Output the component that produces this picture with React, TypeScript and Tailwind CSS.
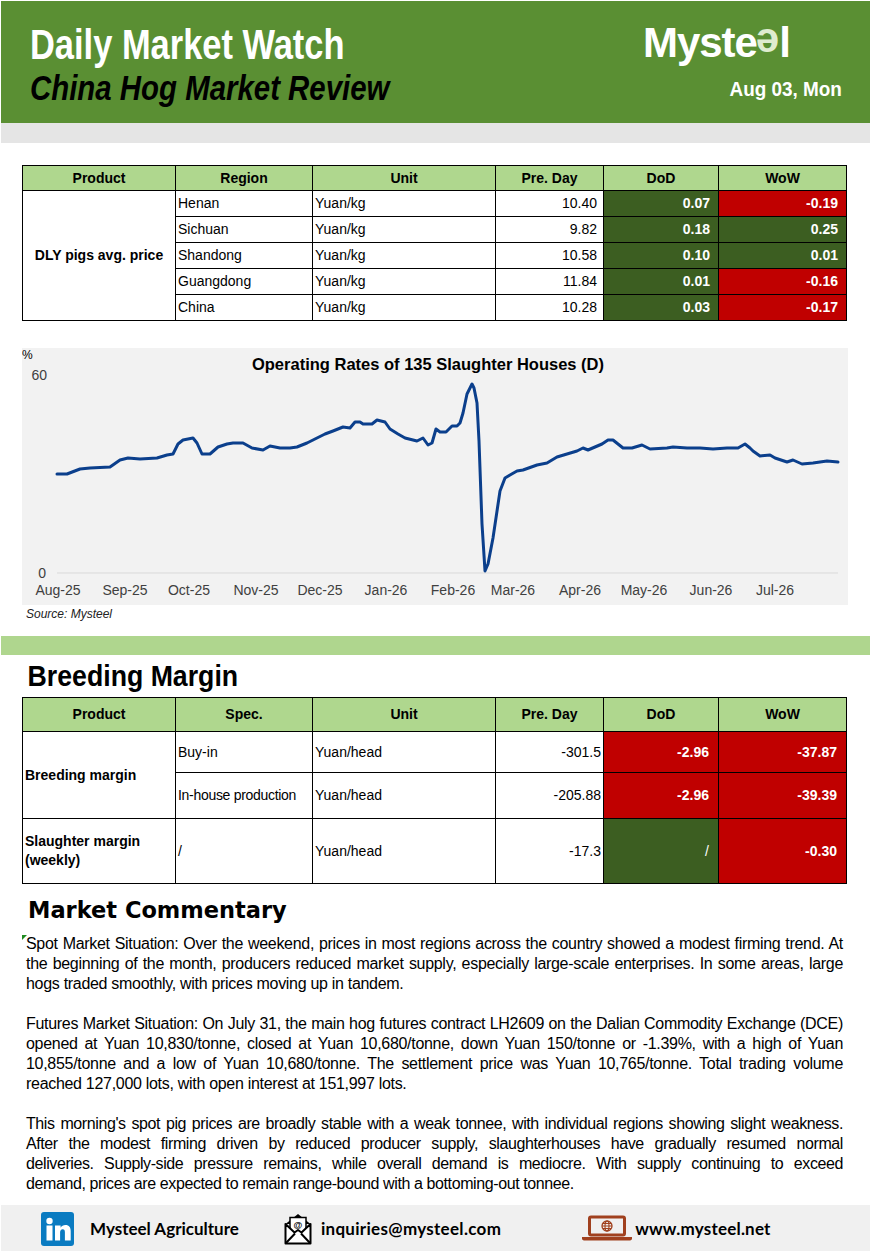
import React from "react";

const arial = "font-['Liberation_Sans',Arial,sans-serif]";

const GREEN = "bg-[#3c5e21]";
const RED = "bg-[#c00000]";

const prices = [
  { region: "Henan", pre: "10.40", dod: "0.07", wow: "-0.19" },
  { region: "Sichuan", pre: "9.82", dod: "0.18", wow: "0.25" },
  { region: "Shandong", pre: "10.58", dod: "0.10", wow: "0.01" },
  { region: "Guangdong", pre: "11.84", dod: "0.01", wow: "-0.16" },
  { region: "China", pre: "10.28", dod: "0.03", wow: "-0.17" },
];

const tone = (v: string) => (v.startsWith("-") ? RED : GREEN);

const line =
  "57,473 67,473 80,468 90,467 110,466 120,459 128,457 140,458 157,457 167,454 173,453 178,443 183,439 193,437 197,442 202,453 210,453 218,446 227,443 233,442 243,442 252,447 263,449 270,445 280,447 290,447 297,446 307,442 317,437 325,433 333,430 343,426 350,427 355,421 360,421 363,423 372,423 377,419 385,421 390,428 398,433 405,437 417,440 423,437 428,444 432,442 436,428 440,431 446,431 452,425 457,425 460,422 463,412 467,393 472,383 474,387 477,402 479,440 482,523 485,570 488,563 493,537 500,490 505,477 510,474 517,470 523,469 537,464 547,462 557,456 567,453 577,450 583,447 588,449 595,446 602,443 608,439 613,439 618,443 623,447 632,447 642,444 650,448 667,447 673,446 687,447 700,447 713,448 727,447 738,447 745,443 750,447 753,450 760,455 770,454 775,457 787,461 793,459 802,463 813,462 827,460 838,461";

const months = [
  ["Aug-25", 58], ["Sep-25", 125], ["Oct-25", 189], ["Nov-25", 256], ["Dec-25", 320], ["Jan-26", 386],
  ["Feb-26", 453], ["Mar-26", 513], ["Apr-26", 580], ["May-26", 644], ["Jun-26", 711], ["Jul-26", 775],
] as const;

const paragraphs = [
  {
    font: "tracking-[-0.3px]",
    lines: [
      "Spot Market Situation: Over the weekend, prices in most regions across the country showed a modest firming trend. At",
      "the beginning of the month, producers reduced market supply, especially large-scale enterprises. In some areas, large",
      "hogs traded smoothly, with prices moving up in tandem.",
    ],
  },
  {
    font: "tracking-[-0.3px]",
    lines: [
      "Futures Market Situation: On July 31, the main hog futures contract LH2609 on the Dalian Commodity Exchange (DCE)",
      "opened at Yuan 10,830/tonne, closed at Yuan 10,680/tonne, down Yuan 150/tonne or -1.39%, with a high of  Yuan",
      "10,855/tonne and a low of Yuan 10,680/tonne. The settlement price was Yuan 10,765/tonne. Total trading volume",
      "reached 127,000 lots, with open interest at 151,997 lots.",
    ],
  },
  {
    font: "tracking-[-0.4px]",
    lines: [
      "This morning's spot pig prices are broadly stable with a weak tonnee, with individual regions showing slight weakness.",
      "After the modest firming driven by reduced producer supply, slaughterhouses have gradually resumed normal",
      "deliveries. Supply-side pressure remains, while overall demand is mediocre. With supply continuing to exceed",
      "demand, prices are expected to remain range-bound with a bottoming-out tonnee.",
    ],
  },
];

function LinkedInIcon() {
  return (
    <svg width="33" height="34" viewBox="0 0 33 34">
      <rect width="33" height="34" rx="3" fill="#0a7bc1" />
      <circle cx="8.5" cy="9" r="3.2" fill="#fff" />
      <rect x="5.5" y="13.5" width="6" height="15" fill="#fff" />
      <path d="M14 13.5h5.6v2.2c1-1.6 2.7-2.6 4.8-2.6 3.8 0 5.3 2.4 5.3 6.2v9.2h-5.8v-8.2c0-1.8-.5-3-2.2-3-1.8 0-2.6 1.3-2.6 3.2v8H14z" fill="#fff" />
    </svg>
  );
}

function MailIcon() {
  return (
    <svg width="30" height="32" viewBox="0 0 30 32">
      <path d="M15 1 2.5 11h25z" fill="#000" />
      <rect x="7" y="4.5" width="16" height="15" fill="#fff" stroke="#000" strokeWidth="1.5" />
      <text x="15" y="15" textAnchor="middle" fontSize="9" fontFamily="Liberation Sans, Arial, sans-serif" fill="#000">@</text>
      <path d="M2.5 11v19.5h25V11l-9 8.5L15 17l-3.5 2.5z" fill="#fff" stroke="#000" strokeWidth="2" strokeLinejoin="round" />
      <path d="M3 30 12 20.5M27 30 18 20.5" stroke="#000" strokeWidth="2" />
    </svg>
  );
}

function LaptopIcon() {
  return (
    <svg width="52" height="28" viewBox="0 0 52 28">
      <rect x="8.5" y="2" width="35" height="18" rx="1.5" fill="none" stroke="#a0401e" strokeWidth="3" />
      <circle cx="26" cy="11" r="5" fill="none" stroke="#a0401e" strokeWidth="1.3" />
      <ellipse cx="26" cy="11" rx="2" ry="5" fill="none" stroke="#a0401e" strokeWidth="1.1" />
      <path d="M21 11h10M22 8.5h8M22 13.5h8" stroke="#a0401e" strokeWidth="1" />
      <path d="M1 22h50v1.5c0 1-1 2-2 2H3c-1 0-2-1-2-2z" fill="#a0401e" />
    </svg>
  );
}

export default function App() {
  const th = "border border-black bg-[#afd78e] font-bold text-center";
  const cols = (
    <colgroup>
      <col className="w-[153px]" />
      <col className="w-[137px]" />
      <col className="w-[183px]" />
      <col className="w-[108px]" />
      <col className="w-[115px]" />
      <col className="w-[128px]" />
    </colgroup>
  );
  return (
    <div className={arial + " w-[870px] min-h-[1251px] overflow-hidden bg-white text-black"}>
      {/* Header */}
      <div className="ml-px mt-px flex h-[122px] justify-between bg-[#5a8f33]">
        <div className="pl-[29px] pt-[21px]">
          <div className="origin-left scale-x-[0.82] whitespace-nowrap text-[42px] font-bold leading-[46px] text-white">
            Daily Market Watch
          </div>
          <div className="mt-[1px] origin-left scale-x-[0.84] whitespace-nowrap text-[35px] font-bold italic leading-[38px] text-black">
            China Hog Market Review
          </div>
        </div>
        <div className="flex flex-col items-end pr-[28px] pt-[17px]">
          <div className="mr-[52px] text-[42px] font-bold leading-[50px] tracking-[-1px] text-white">
            Myst<span>e</span>
            <span className="inline-block rotate-180 text-[#dfeccf]">e</span>l
          </div>
          <div className="mt-[10px] origin-right scale-x-[0.9] whitespace-nowrap text-[21px] font-bold leading-[22px] text-white">
            Aug 03, Mon
          </div>
        </div>
      </div>
      <div className="ml-px h-[20px] bg-[#e5e5e5]" />

      {/* Price table */}
      <table className="mx-[22px] mt-[22px] w-[824px] table-fixed border-collapse text-[14px]">
        {cols}
        <thead>
          <tr className="h-[25px]">
            {["Product", "Region", "Unit", "Pre. Day", "DoD", "WoW"].map((h) => (
              <th key={h} className={th}>{h}</th>
            ))}
          </tr>
        </thead>
        <tbody>
          {prices.map((r, i) => (
            <tr key={r.region} className="h-[26px]">
              {i === 0 && (
                <td rowSpan={5} className="border border-black text-center font-bold">DLY pigs avg. price</td>
              )}
              <td className="border border-black pl-[2px]">{r.region}</td>
              <td className="border border-black pl-[2px]">Yuan/kg</td>
              <td className="border border-black pr-[6px] text-right">{r.pre}</td>
              <td className={"border border-black pr-[8px] text-right font-bold text-white " + tone(r.dod)}>{r.dod}</td>
              <td className={"border border-black pr-[8px] text-right font-bold text-white " + tone(r.wow)}>{r.wow}</td>
            </tr>
          ))}
        </tbody>
      </table>

      {/* Chart */}
      <div className="mx-[22px] mt-[27px] h-[257px] bg-[#f2f2f2]">
        <svg width="824" height="257" viewBox="22 347 824 257" fontFamily="Liberation Sans, Arial, sans-serif">
          <text x="22" y="358" fontSize="12" fill="#000">%</text>
          <text x="47" y="379" fontSize="14" fill="#404040" textAnchor="end">60</text>
          <text x="46" y="577" fontSize="14" fill="#404040" textAnchor="end">0</text>
          <text x="428" y="369" fontSize="16.5" fontWeight="bold" textAnchor="middle" fill="#000">
            Operating Rates of 135 Slaughter Houses (D)
          </text>
          <line x1="57" y1="572" x2="838" y2="572" stroke="#d9d9d9" strokeWidth="1" />
          {months.map(([m, x]) => (
            <text key={m} x={x} y="594" fontSize="14" fill="#404040" textAnchor="middle">{m}</text>
          ))}
          <polyline points={line} fill="none" stroke="#0b3f8c" strokeWidth="3" strokeLinejoin="round" strokeLinecap="round" />
        </svg>
      </div>
      <div className="pl-[26px] text-[12px] italic leading-[18px] text-[#222]">Source: Mysteel</div>

      {/* Breeding margin */}
      <div className="ml-px mt-[13px] h-[19px] bg-[#afd68e]" />
      <h2 className="mt-[6px] origin-left scale-x-[0.92] whitespace-nowrap pl-[30px] text-[29px] font-bold leading-[30px]">
        Breeding Margin
      </h2>
      <table className="mx-[22px] mt-[6px] w-[824px] table-fixed border-collapse text-[14px]">
        {cols}
        <thead>
          <tr className="h-[34px]">
            {["Product", "Spec.", "Unit", "Pre. Day", "DoD", "WoW"].map((h) => (
              <th key={h} className={th}>{h}</th>
            ))}
          </tr>
        </thead>
        <tbody>
          <tr className="h-[41px]">
            <td rowSpan={2} className="border border-black pl-[2px] font-bold">Breeding margin</td>
            <td className="border border-black pl-[2px]">Buy-in</td>
            <td className="border border-black pl-[2px]">Yuan/head</td>
            <td className="border border-black pr-[2px] text-right">-301.5</td>
            <td className={"border border-black pr-[9px] text-right font-bold text-white " + RED}>-2.96</td>
            <td className={"border border-black pr-[9px] text-right font-bold text-white " + RED}>-37.87</td>
          </tr>
          <tr className="h-[46px]">
            <td className="whitespace-nowrap border border-black pl-[2px] tracking-[-0.3px]">In-house production</td>
            <td className="border border-black pl-[2px]">Yuan/head</td>
            <td className="border border-black pr-[2px] text-right">-205.88</td>
            <td className={"border border-black pr-[9px] text-right font-bold text-white " + RED}>-2.96</td>
            <td className={"border border-black pr-[9px] text-right font-bold text-white " + RED}>-39.39</td>
          </tr>
          <tr className="h-[65px]">
            <td className="border border-black pl-[2px] font-bold leading-[19px]">Slaughter margin<br />(weekly)</td>
            <td className="border border-black pl-[2px]">/</td>
            <td className="border border-black pl-[2px]">Yuan/head</td>
            <td className="border border-black pr-[2px] text-right">-17.3</td>
            <td className={"border border-black pr-[9px] text-right text-white " + GREEN}>/</td>
            <td className={"border border-black pr-[9px] text-right font-bold text-white " + RED}>-0.30</td>
          </tr>
        </tbody>
      </table>

      {/* Commentary */}
      <h2 className="mt-[10px] pl-[28px] font-['DejaVu_Sans',sans-serif] text-[22.5px] font-bold leading-[32px]">
        Market Commentary
      </h2>
      <div className="relative mt-[8px] flex flex-col gap-[20px] pl-[26px] pr-[27px]">
        <span className="absolute left-[22px] top-[1px] h-0 w-0 border-r-[5px] border-t-[5px] border-r-transparent border-t-[#1f8a1f]" />
        {paragraphs.map((p, i) => (
          <div key={i} className={p.font + " text-[16px] leading-[20px] text-black"}>
            {p.lines.map((l, j) => (
              <div
                key={j}
                className={
                  "whitespace-nowrap " +
                  (j < p.lines.length - 1 ? "text-justify [text-align-last:justify]" : "")
                }
              >
                {l}
              </div>
            ))}
          </div>
        ))}
      </div>

      {/* Footer */}
      <div className="ml-px mt-[11px] flex h-[48px] items-center bg-[#f0f0f0] pl-[40px] font-['Lato',sans-serif] text-[17px] font-bold">
        <LinkedInIcon />
        <span className="ml-[16px]">Mysteel Agriculture</span>
        <span className="ml-[44px]"><MailIcon /></span>
        <span className="ml-[8px] tracking-[0.3px]">inquiries@mysteel.com</span>
        <span className="ml-[80px]"><LaptopIcon /></span>
        <span className="ml-[2px] tracking-[0.2px]">www.mysteel.net</span>
      </div>
    </div>
  );
}
